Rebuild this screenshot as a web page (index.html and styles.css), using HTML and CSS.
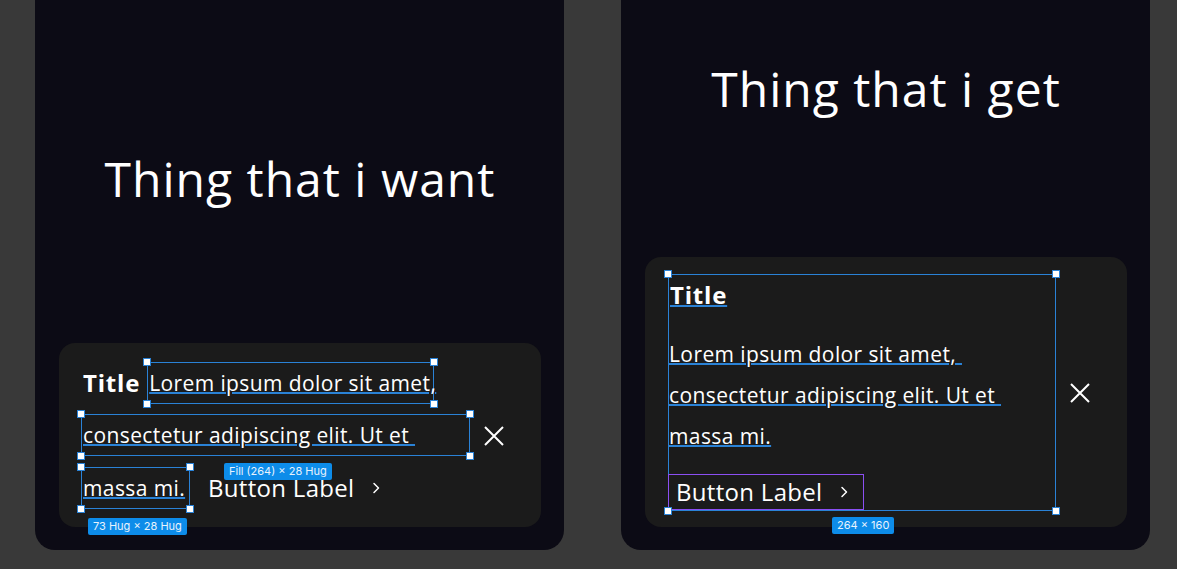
FILE: index.html
```html
<!DOCTYPE html>
<html>
<head>
	<meta charset="UTF-8">
	<title>Want vs get</title>
	<link rel="stylesheet" href="styles.css">
</head>
<body>

	<div class="canvas">
		<!-- left frame: the layout I want -->
		<section class="frame frame-want">
			<h1 class="headline">Thing that i want</h1>
			<div class="card card-want">
				<div class="card-body">
					<div class="row">
						<span class="title">Title</span>
						<span class="sel sel-lorem">
							<span class="text">Lorem ipsum dolor sit amet,</span>
							<i class="handle tl"></i><i class="handle tr"></i><i class="handle bl"></i><i class="handle br"></i>
						</span>
					</div>
					<div class="row">
						<span class="sel sel-fill">
							<span class="text">consectetur adipiscing elit. Ut et&nbsp;</span>
							<i class="handle tl"></i><i class="handle tr"></i><i class="handle bl"></i><i class="handle br"></i>
							<span class="badge badge-fill">Fill (264) × 28 Hug</span>
						</span>
					</div>
					<div class="row">
						<span class="sel sel-hug">
							<span class="text">massa mi.</span>
							<i class="handle tl"></i><i class="handle tr"></i><i class="handle bl"></i><i class="handle br"></i>
							<span class="badge badge-hug">73 Hug × 28 Hug</span>
						</span>
						<span class="button">
							<span class="button-label">Button Label</span>
							<svg class="chevron" width="8" height="12" viewBox="0 0 8 12"><path d="M2 1.5 L6.5 6 L2 10.5" fill="none" stroke="#fff" stroke-width="1.5" stroke-linecap="round" stroke-linejoin="round"/></svg>
						</span>
					</div>
				</div>
				<svg class="close" width="20" height="20" viewBox="0 0 20 20"><path d="M1 1 L19 19 M19 1 L1 19" fill="none" stroke="#fff" stroke-width="2"/></svg>
			</div>
		</section>

		<!-- right frame: what the auto layout gives -->
		<section class="frame frame-get">
			<h1 class="headline">Thing that i get</h1>
			<div class="card card-get">
				<div class="card-body sel sel-stack">
					<div class="stack-title"><span class="title text">Title</span></div>
					<p class="stack-text"><span class="text">Lorem ipsum dolor sit amet,&nbsp;</span><br><span class="text">consectetur adipiscing elit. Ut et&nbsp;</span><br><span class="text">massa mi.</span></p>
					<span class="button button-boxed">
						<span class="button-label">Button Label</span>
						<svg class="chevron" width="8" height="12" viewBox="0 0 8 12"><path d="M2 1.5 L6.5 6 L2 10.5" fill="none" stroke="#fff" stroke-width="1.5" stroke-linecap="round" stroke-linejoin="round"/></svg>
					</span>
					<i class="handle tl"></i><i class="handle tr"></i><i class="handle bl"></i><i class="handle br"></i>
					<span class="badge badge-size">264 × 160</span>
				</div>
				<svg class="close" width="20" height="20" viewBox="0 0 20 20"><path d="M1 1 L19 19 M19 1 L1 19" fill="none" stroke="#fff" stroke-width="2"/></svg>
			</div>
		</section>
	</div>

</body>
</html>
```

FILE: styles.css
```css
* {
	margin: 0;
	padding: 0;
	box-sizing: border-box;
}
body {
	background: #393939;
	font-family: "Open Sans", "Noto Sans", sans-serif;
	color: #fff;
	overflow: hidden;
}
.canvas {
	display: flex;
	gap: 57px;
	padding-left: 35px;
	height: 569px;
}
.frame {
	width: 529px;
	height: 550px;
	background: #0c0b15;
	border-radius: 0 0 20px 20px;
	display: flex;
	flex-direction: column;
	justify-content: space-between;
	padding: 0 23px 23px 24px;
}
.headline {
	font-weight: 400;
	font-size: 48px;
	line-height: 60px;
	text-align: center;
	letter-spacing: 1px;
}
.frame-want .headline {
	margin-top: 149px;
}
.frame-get .headline {
	margin-top: 59px;
}
.card {
	background: #1b1b1b;
	border-radius: 16px;
	display: flex;
	align-items: center;
	gap: 14px;
}
.card-want {
	padding: 19px 37px 18px 22px;
}
.card-get {
	padding: 17px 37px 16px 23px;
}
.card-body {
	flex: 1;
	position: relative;
}
.close {
	flex: none;
	display: block;
}

/* text */
.title {
	font-weight: 700;
	font-size: 24px;
	letter-spacing: 0.8px;
}
.text {
	font-size: 21px;
	letter-spacing: 0.4px;
	text-decoration: underline;
	text-decoration-color: #2a82d6;
	text-decoration-thickness: 2px;
	text-underline-offset: 1px;
}
.title.text {
	font-size: 24px;
	letter-spacing: 0.8px;
}

/* left card rows */
.row {
	display: flex;
	align-items: center;
	height: 42px;
	line-height: 40px;
}
.row + .row {
	margin-top: 10px;
}
.row:last-child {
	margin-top: 11px;
}
.row .title {
	margin: 0 7px 0 2px;
}
.sel {
	position: relative;
	border: 1px solid #2a82d6;
	height: 42px;
	display: flex;
	align-items: center;
}
.sel-lorem {
	width: 287px;
}
.sel-fill {
	width: 389px;
}
.sel-hug {
	width: 109px;
}
.sel .text {
	padding-left: 1px;
	white-space: nowrap;
}

/* buttons */
.button {
	display: flex;
	align-items: center;
	gap: 18px;
}
.row .button {
	margin-left: 18px;
}
.button-label {
	font-size: 24px;
	letter-spacing: 0.3px;
	line-height: 34px;
}
.chevron {
	display: block;
}
.button-boxed {
	width: fit-content;
	border: 1px solid #8b4ff2;
	height: 36px;
	padding: 0 15px 0 7px;
}

/* right card stack */
.sel-stack {
	display: block;
	height: 237px;
}
.stack-title {
	font-size: 24px;
	line-height: 40px;
}
.stack-text {
	font-size: 21px;
	line-height: 41px;
	margin-top: 19px;
}
.stack-text .text {
	padding-left: 0;
}
.sel-stack .button-boxed {
	margin-top: 17px;
	margin-left: -1px;
}

/* selection handles */
.handle {
	position: absolute;
	width: 8px;
	height: 8px;
	background: #fff;
	border: 1px solid #2a82d6;
	z-index: 1;
}
.tl { left: -5px; top: -5px; }
.tr { right: -5px; top: -5px; }
.bl { left: -5px; bottom: -5px; }
.br { right: -5px; bottom: -5px; }

/* size badges */
.badge {
	position: absolute;
	background: #0d8ce9;
	color: #e8f3fd;
	font-family: Inter, "Liberation Sans", sans-serif;
	font-size: 11px;
	line-height: 17px;
	padding: 0 5px;
	border-radius: 2px;
	white-space: nowrap;
}
.badge-fill {
	left: 142px;
	top: 48px;
}
.badge-hug {
	left: 6px;
	top: 50px;
}
.badge-size {
	left: 163px;
	bottom: -24px;
}
```
